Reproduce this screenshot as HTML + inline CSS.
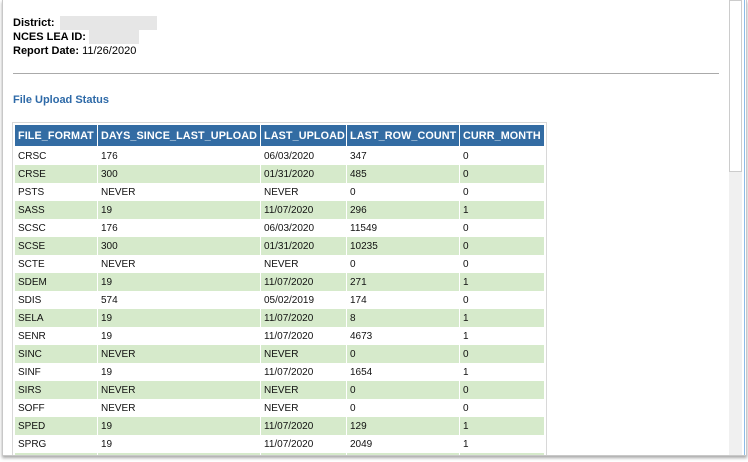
<!DOCTYPE html><html><head><style>
body{margin:0;width:748px;height:462px;background:#fff;overflow:hidden;font-family:"Liberation Sans",Arial,sans-serif;position:relative}
.frame{position:absolute;left:2px;top:0;width:743px;height:455px;border:1px solid #c8c8c8;border-top:none;box-shadow:0 2px 3px rgba(0,0,0,.35);background:#fff;overflow:hidden}
.info{position:absolute;left:10px;top:16px;font-size:11px;line-height:14px;color:#000}
.blur{display:inline-block;background:#e6e6e6;height:14px;vertical-align:top}
hr{position:absolute;left:10px;top:73px;width:706px;margin:0;border:none;border-top:1px solid #aaa}
h3{position:absolute;left:10px;top:94px;margin:0;font-size:11px;color:#2e6aa8;font-weight:bold}
.tw{position:absolute;left:9px;top:122px;width:533px;height:340px;border:1px solid #d8d8d8;background:#fff}
table{position:absolute;left:1px;top:2px;border-collapse:separate;border-spacing:1px 0;table-layout:fixed;width:531px}
th{background:#336ca3;color:#fff;font-size:10.8px;letter-spacing:.1px;text-align:left;height:21px;padding:0 3px;border-bottom:1px solid #fff;font-weight:bold;white-space:nowrap;overflow:hidden}
td{font-size:10px;height:18px;padding:0 3px;color:#111;overflow:hidden}
tr.g td{background:#d6eacb}
.sb{position:absolute;left:726px;top:0;width:13px;height:455px;background:#f0f0f0}
.th{position:absolute;left:726px;top:0;width:11px;height:170px;background:#fff;border:1px solid #ccc}
.ln{position:absolute;left:741px;top:0;width:1px;height:455px;background:#8cbbe8}
</style></head><body><div class="frame">
<div class="info"><b>District:</b> <span class="blur" style="width:97px;margin-left:2px"></span><br><b>NCES LEA ID:</b> <span class="blur" style="width:50px"></span><br><b>Report Date:</b> 11/26/2020</div>
<hr><h3>File Upload Status</h3>
<div class="tw"><table>
<colgroup><col style="width:82px"><col style="width:162px"><col style="width:85px"><col style="width:112px"><col style="width:84px"></colgroup>
<tr><th>FILE_FORMAT</th><th>DAYS_SINCE_LAST_UPLOAD</th><th>LAST_UPLOAD</th><th>LAST_ROW_COUNT</th><th>CURR_MONTH</th></tr>
<tr><td>CRSC</td><td>176</td><td>06/03/2020</td><td>347</td><td>0</td></tr>
<tr class="g"><td>CRSE</td><td>300</td><td>01/31/2020</td><td>485</td><td>0</td></tr>
<tr><td>PSTS</td><td>NEVER</td><td>NEVER</td><td>0</td><td>0</td></tr>
<tr class="g"><td>SASS</td><td>19</td><td>11/07/2020</td><td>296</td><td>1</td></tr>
<tr><td>SCSC</td><td>176</td><td>06/03/2020</td><td>11549</td><td>0</td></tr>
<tr class="g"><td>SCSE</td><td>300</td><td>01/31/2020</td><td>10235</td><td>0</td></tr>
<tr><td>SCTE</td><td>NEVER</td><td>NEVER</td><td>0</td><td>0</td></tr>
<tr class="g"><td>SDEM</td><td>19</td><td>11/07/2020</td><td>271</td><td>1</td></tr>
<tr><td>SDIS</td><td>574</td><td>05/02/2019</td><td>174</td><td>0</td></tr>
<tr class="g"><td>SELA</td><td>19</td><td>11/07/2020</td><td>8</td><td>1</td></tr>
<tr><td>SENR</td><td>19</td><td>11/07/2020</td><td>4673</td><td>1</td></tr>
<tr class="g"><td>SINC</td><td>NEVER</td><td>NEVER</td><td>0</td><td>0</td></tr>
<tr><td>SINF</td><td>19</td><td>11/07/2020</td><td>1654</td><td>1</td></tr>
<tr class="g"><td>SIRS</td><td>NEVER</td><td>NEVER</td><td>0</td><td>0</td></tr>
<tr><td>SOFF</td><td>NEVER</td><td>NEVER</td><td>0</td><td>0</td></tr>
<tr class="g"><td>SPED</td><td>19</td><td>11/07/2020</td><td>129</td><td>1</td></tr>
<tr><td>SPRG</td><td>19</td><td>11/07/2020</td><td>2049</td><td>1</td></tr>
<tr class="g"><td>&nbsp;</td><td></td><td></td><td></td><td></td></tr>
</table></div>
<div class="sb"></div><div class="th"></div><div class="ln"></div>
</div></body></html>
